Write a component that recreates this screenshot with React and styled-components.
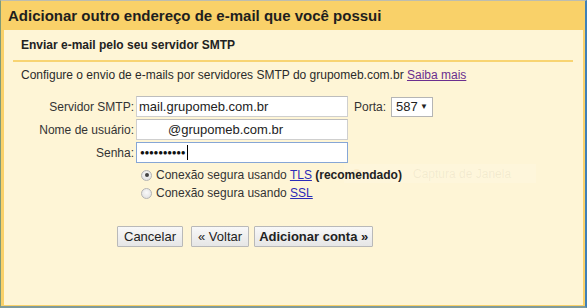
import React from "react";
import styled, { createGlobalStyle } from "styled-components";

const GlobalStyle = createGlobalStyle`
  html, body {
    margin: 0;
    padding: 0;
    background: #fef6d8;
  }
  body {
    font-family: "Liberation Sans", Arial, sans-serif;
    color: #222;
  }
`;

const Window = styled.div`
  width: 587px;
  height: 308px;
  box-sizing: border-box;
  border-top: 1px solid #bdbdb0;
  border-left: 1px solid #7f9a78;
  border-right: 2px solid #3f80b8;
  border-bottom: 2px solid #7f9b9c;
  display: flex;
  flex-direction: column;
  background: #f9d169;
`;

const TitleBar = styled.div`
  height: 29px;
  display: flex;
  align-items: center;
  padding-left: 7px;
  font-size: 15px;
  font-weight: bold;
  color: #1e1e1e;
`;

const Body = styled.div`
  position: relative;
  flex: 1;
  margin: 0 2px 1px 3px;
  background: #fef5d6;
  display: flex;
  flex-direction: column;
`;

const SectionHead = styled.div`
  margin: 0 10px 0 9px;
  padding: 8px 0 8px 8px;
  font-size: 12px;
  line-height: 14px;
  font-weight: bold;
  border-bottom: 2px solid #f8d472;
`;

const Intro = styled.p`
  margin: 6px 0 0 17px;
  font-size: 12px;
  line-height: 14px;
  color: #2a2a2a;
`;

const Link = styled.a`
  color: ${p => (p.$visited ? "#6b2f8f" : "#2b2bb8")};
  text-decoration: underline;
  cursor: pointer;
`;

const Form = styled.div`
  margin: 14px 0 0 17px;
  display: grid;
  grid-template-columns: 113px 212px auto;
  column-gap: 2px;
  row-gap: 2px;
  align-items: center;
`;

const Label = styled.label`
  text-align: right;
  font-size: 12px;
  color: #333;
`;

const Input = styled.input`
  box-sizing: border-box;
  width: 212px;
  height: 21px;
  margin: 0;
  padding: 0 0 0 ${p => p.$indent || 2}px;
  border: 1px solid #cfcfcf;
  border-top-color: #bdbdbd;
  background: #fff;
  font-family: "Liberation Sans", Arial, sans-serif;
  font-size: 13px;
  color: #222;
  outline: none;
`;

const PassField = styled.div`
  box-sizing: border-box;
  width: 212px;
  height: 21px;
  padding-left: 3px;
  border: 1px solid #86a6d6;
  background: #fff;
  display: flex;
  align-items: center;
  font-size: 8px;
  letter-spacing: -0.3px;
  color: #111;
`;

const Caret = styled.span`
  display: inline-block;
  width: 1px;
  height: 15px;
  margin-left: 2px;
  background: #000;
`;

const PortGroup = styled.div`
  display: flex;
  align-items: center;
  gap: 5px;
  margin-left: 4px;
`;

const Select = styled.div`
  box-sizing: border-box;
  height: 20px;
  width: 42px;
  padding: 0 4px;
  border: 1px solid #b5b5b5;
  background: #fff;
  display: flex;
  align-items: center;
  justify-content: space-between;
  font-size: 13px;
  color: #222;
`;

const Arrow = styled.span`
  font-size: 8px;
  color: #222;
`;

const Options = styled.div`
  position: relative;
  z-index: 1;
  margin: 3px 0 0 137px;
  display: flex;
  flex-direction: column;
`;

const Option = styled.div`
  height: 18px;
  display: flex;
  align-items: center;
  gap: 4px;
  font-size: 12px;
  color: #333;
`;

const Radio = styled.span`
  box-sizing: border-box;
  width: 11px;
  height: 11px;
  border-radius: 50%;
  border: 1px solid #b4b4b4;
  background: radial-gradient(circle at 50% 40%, #fafafa 0%, #dcdcdc 100%);
  display: flex;
  align-items: center;
  justify-content: center;

  &::after {
    content: "";
    width: 4px;
    height: 4px;
    border-radius: 50%;
    background: ${p => (p.$checked ? "#444" : "transparent")};
  }
`;

const Strong = styled.b`
  color: #222;
`;

const Buttons = styled.div`
  margin: 24px 0 0 113px;
  display: flex;
  gap: 5px;
`;

const Button = styled.button`
  height: 21px;
  padding: 0 ${p => (p.$primary ? 4 : 6)}px;
  margin-right: ${p => (p.$spaced ? 3 : 0)}px;
  border: 1px solid #b9b9b9;
  border-radius: 1px;
  background: linear-gradient(#f8f8f8, #e6e6e6);
  font-family: "Liberation Sans", Arial, sans-serif;
  font-size: 13px;
  font-weight: ${p => (p.$primary ? "bold" : "normal")};
  color: #222;
  cursor: pointer;
`;

const Ghost = styled.div`
  position: absolute;
  left: 340px;
  top: 134px;
  width: 192px;
  height: 19px;
  display: flex;
  align-items: center;
  padding-left: 8px;
  box-sizing: border-box;
  background: rgba(255, 255, 255, 0.14);
  font-size: 12px;
  color: rgba(120, 110, 80, 0.09);
`;

const GhostDot = styled.span`
  width: 9px;
  height: 9px;
  margin-right: 52px;
  border-radius: 50%;
  background: rgba(230, 170, 60, 0.1);
`;

export default function App() {
  return (
    <>
      <GlobalStyle />
      <Window>
        <TitleBar>Adicionar outro endereço de e-mail que você possui</TitleBar>
        <Body>
          <SectionHead>Enviar e-mail pelo seu servidor SMTP</SectionHead>
          <Intro>
            Configure o envio de e-mails por servidores SMTP do grupomeb.com.br{" "}
            <Link $visited>Saiba mais</Link>
          </Intro>

          <Form>
            <Label>Servidor SMTP:</Label>
            <Input readOnly defaultValue="mail.grupomeb.com.br" />
            <PortGroup>
              <Label>Porta:</Label>
              <Select>
                587 <Arrow>▼</Arrow>
              </Select>
            </PortGroup>

            <Label>Nome de usuário:</Label>
            <Input readOnly defaultValue="@grupomeb.com.br" $indent={31} />
            <span />

            <Label>Senha:</Label>
            <PassField>
              ●●●●●●●●●●
              <Caret />
            </PassField>
            <span />
          </Form>

          <Options>
            <Option>
              <Radio $checked />
              <span>
                Conexão segura usando <Link>TLS</Link> <Strong>(recomendado)</Strong>
              </span>
            </Option>
            <Option>
              <Radio />
              <span>
                Conexão segura usando <Link>SSL</Link>
              </span>
            </Option>
          </Options>

          <Buttons>
            <Button $spaced>Cancelar</Button>
            <Button>« Voltar</Button>
            <Button $primary>Adicionar conta »</Button>
          </Buttons>

          <Ghost>
            <GhostDot />
            Captura de Janela
          </Ghost>
        </Body>
      </Window>
    </>
  );
}
